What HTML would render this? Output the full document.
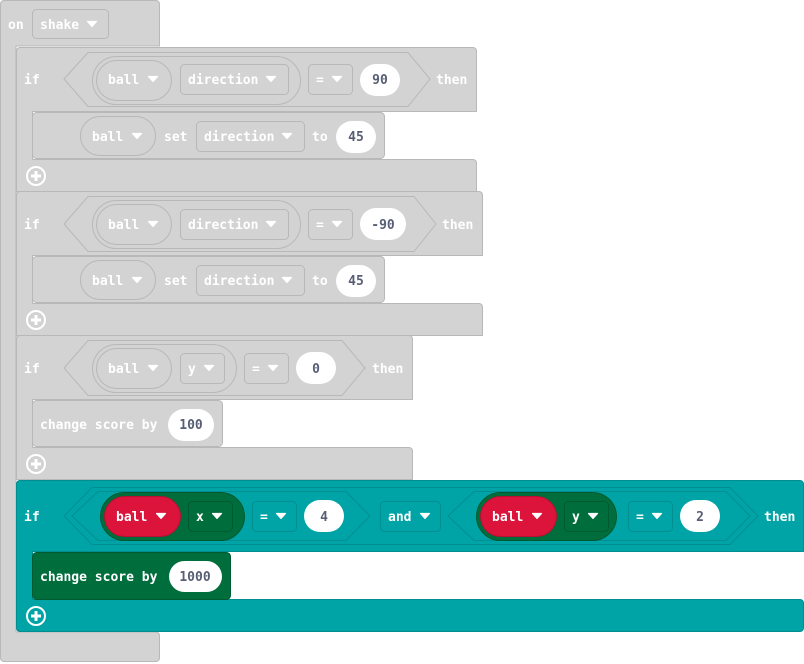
<!DOCTYPE html>
<html><head><meta charset="utf-8"><style>
html,body{margin:0;padding:0;background:#fff;width:804px;height:664px;overflow:hidden}
svg text{font-family:"DejaVu Sans Mono","Liberation Mono",monospace;font-weight:bold;font-size:13px;fill:#fff}
svg text.v{fill:#575E75;text-anchor:middle}
</style></head><body>
<svg width="804" height="664" viewBox="0 0 804 664" xmlns="http://www.w3.org/2000/svg">
<defs>
<g id="arr"><polygon points="0.5,-2.5 9.5,-2.5 5,2.5" fill="#fff" stroke="#fff" stroke-width="1.2" stroke-linejoin="round"/></g>
<g id="plus"><circle r="9" fill="none" stroke="#fff" stroke-width="2"/><path d="M-5,0H5M0,-5V5" stroke="#fff" stroke-width="3"/></g>
</defs>
<!-- event block -->
<path d="M4,0.5H156a3.5,3.5 0 0 1 3.5,3.5V46H16V632H156a3.5,3.5 0 0 1 3.5,3.5V658a3.5,3.5 0 0 1 -3.5,3.5H4a3.5,3.5 0 0 1 -3.5,-3.5V4a3.5,3.5 0 0 1 3.5,-3.5Z" fill="#d3d3d3" stroke="#b8b8b8"/>
<text x="8" y="29">on</text>
<rect x="32.5" y="9.5" width="76" height="29" rx="4" fill="none" stroke="#b8b8b8"/>
<text x="40" y="29">shake</text><use href="#arr" x="87" y="24"/>

<!-- if 1 -->
<path d="M20,47.5H473a3.5,3.5 0 0 1 3.5,3.5V111.5H32.5V159.5H473a3.5,3.5 0 0 1 3.5,3.5V191.5H16.5V51a3.5,3.5 0 0 1 3.5,-3.5Z" fill="#d3d3d3" stroke="#b8b8b8" stroke-linejoin="round"/>
<text x="24" y="84">if</text>
<polygon points="64,79 88,52.5 408,52.5 430,79 408,106.5 88,106.5" fill="none" stroke="#b8b8b8"/>
<rect x="92.5" y="56.5" width="208" height="48" rx="24" fill="none" stroke="#b8b8b8"/>
<rect x="96.5" y="60.5" width="75" height="40" rx="20" fill="none" stroke="#b8b8b8"/>
<text x="108" y="84">ball</text><use href="#arr" x="148" y="79"/>
<rect x="180.5" y="64.5" width="108" height="30" rx="4" fill="none" stroke="#b8b8b8"/>
<text x="188" y="84">direction</text><use href="#arr" x="266" y="79"/>
<rect x="308.5" y="64.5" width="44" height="30" rx="4" fill="none" stroke="#b8b8b8"/>
<text x="316" y="84">=</text><use href="#arr" x="332" y="79"/>
<rect x="360" y="64" width="40" height="32" rx="16" fill="#fff"/>
<text class="v" x="380" y="84">90</text>
<text x="436" y="84">then</text>
<rect x="32.5" y="112.5" width="352" height="46" rx="4" fill="#d3d3d3" stroke="#b8b8b8"/>
<rect x="80.5" y="116.5" width="75" height="39" rx="19.5" fill="none" stroke="#b8b8b8"/>
<text x="92" y="141">ball</text><use href="#arr" x="132" y="136"/>
<text x="164" y="141">set</text>
<rect x="196.5" y="121.5" width="108" height="30" rx="4" fill="none" stroke="#b8b8b8"/>
<text x="204" y="141">direction</text><use href="#arr" x="282" y="136"/>
<text x="312" y="141">to</text>
<rect x="336" y="121" width="40" height="32" rx="16" fill="#fff"/>
<text class="v" x="356" y="141">45</text>
<use href="#plus" x="36" y="176"/>

<!-- if 2 -->
<path d="M20,191.5H479a3.5,3.5 0 0 1 3.5,3.5V255.5H32.5V303.5H479a3.5,3.5 0 0 1 3.5,3.5V335.5H16.5V195a3.5,3.5 0 0 1 3.5,-3.5Z" fill="#d3d3d3" stroke="#b8b8b8" stroke-linejoin="round"/>
<text x="24" y="229">if</text>
<polygon points="64,224 88,196.5 414,196.5 436,224 414,251.5 88,251.5" fill="none" stroke="#b8b8b8"/>
<rect x="92.5" y="200.5" width="208" height="48" rx="24" fill="none" stroke="#b8b8b8"/>
<rect x="96.5" y="204.5" width="75" height="40" rx="20" fill="none" stroke="#b8b8b8"/>
<text x="108" y="229">ball</text><use href="#arr" x="148" y="224"/>
<rect x="180.5" y="209.5" width="108" height="30" rx="4" fill="none" stroke="#b8b8b8"/>
<text x="188" y="229">direction</text><use href="#arr" x="266" y="224"/>
<rect x="308.5" y="209.5" width="44" height="30" rx="4" fill="none" stroke="#b8b8b8"/>
<text x="316" y="229">=</text><use href="#arr" x="332" y="224"/>
<rect x="360" y="208" width="46" height="32" rx="16" fill="#fff"/>
<text class="v" x="383" y="229">-90</text>
<text x="442" y="229">then</text>
<rect x="32.5" y="256.5" width="352" height="46" rx="4" fill="#d3d3d3" stroke="#b8b8b8"/>
<rect x="80.5" y="260.5" width="75" height="39" rx="19.5" fill="none" stroke="#b8b8b8"/>
<text x="92" y="285">ball</text><use href="#arr" x="132" y="280"/>
<text x="164" y="285">set</text>
<rect x="196.5" y="265.5" width="108" height="30" rx="4" fill="none" stroke="#b8b8b8"/>
<text x="204" y="285">direction</text><use href="#arr" x="282" y="280"/>
<text x="312" y="285">to</text>
<rect x="336" y="265" width="40" height="32" rx="16" fill="#fff"/>
<text class="v" x="356" y="285">45</text>
<use href="#plus" x="36" y="320"/>

<!-- if 3 -->
<path d="M20,335.5H409a3.5,3.5 0 0 1 3.5,3.5V399.5H32.5V447.5H409a3.5,3.5 0 0 1 3.5,3.5V479.5H16.5V339a3.5,3.5 0 0 1 3.5,-3.5Z" fill="#d3d3d3" stroke="#b8b8b8" stroke-linejoin="round"/>
<text x="24" y="373">if</text>
<polygon points="64,368 88,340.5 342,340.5 365,368 342,395.5 88,395.5" fill="none" stroke="#b8b8b8"/>
<rect x="92.5" y="344.5" width="144" height="48" rx="24" fill="none" stroke="#b8b8b8"/>
<rect x="96.5" y="348.5" width="75" height="40" rx="20" fill="none" stroke="#b8b8b8"/>
<text x="108" y="373">ball</text><use href="#arr" x="148" y="368"/>
<rect x="180.5" y="353.5" width="44" height="30" rx="4" fill="none" stroke="#b8b8b8"/>
<text x="188" y="373">y</text><use href="#arr" x="204" y="368"/>
<rect x="244.5" y="353.5" width="44" height="30" rx="4" fill="none" stroke="#b8b8b8"/>
<text x="252" y="373">=</text><use href="#arr" x="268" y="368"/>
<rect x="296" y="352" width="40" height="32" rx="16" fill="#fff"/>
<text class="v" x="316" y="373">0</text>
<text x="372" y="373">then</text>
<rect x="32.5" y="400.5" width="190" height="46" rx="4" fill="#d3d3d3" stroke="#b8b8b8"/>
<text x="40" y="429">change score by</text>
<rect x="168" y="409" width="46" height="32" rx="16" fill="#fff"/>
<text class="v" x="191" y="429">100</text>
<use href="#plus" x="36" y="464"/>

<!-- if 4 teal -->
<path d="M20,480.5H800a3.5,3.5 0 0 1 3.5,3.5V551.5H32.5V599.5H800a3.5,3.5 0 0 1 3.5,3.5V628a3.5,3.5 0 0 1 -3.5,3.5H20a3.5,3.5 0 0 1 -3.5,-3.5V484a3.5,3.5 0 0 1 3.5,-3.5Z" fill="#00a4a6" stroke="#008e90" stroke-linejoin="round"/>
<text x="24" y="521">if</text>
<polygon points="64,516 92,487.5 730,487.5 758,516 730,544.5 92,544.5" fill="none" stroke="#008e90"/>
<polygon points="72,516 98,491.5 346,491.5 370,516 346,540.5 98,540.5" fill="none" stroke="#008e90"/>
<rect x="100.5" y="492.5" width="144" height="48" rx="24" fill="#006e3c" stroke="#005a31"/>
<rect x="104.5" y="496.5" width="76" height="40" rx="20" fill="#dc143c" stroke="#b81030"/>
<text x="116" y="521">ball</text><use href="#arr" x="156" y="516"/>
<rect x="188.5" y="501.5" width="44" height="30" rx="4" fill="#006e3c" stroke="#005a31"/>
<text x="196" y="521">x</text><use href="#arr" x="212" y="516"/>
<rect x="252.5" y="501.5" width="44" height="30" rx="4" fill="#00a4a6" stroke="#008e90"/>
<text x="260" y="521">=</text><use href="#arr" x="276" y="516"/>
<rect x="304" y="500" width="40" height="32" rx="16" fill="#fff"/>
<text class="v" x="324" y="521">4</text>
<rect x="380.5" y="501.5" width="60" height="30" rx="4" fill="#00a4a6" stroke="#008e90"/>
<text x="388" y="521">and</text><use href="#arr" x="420" y="516"/>
<polygon points="448,516 474,491.5 726,491.5 750,516 726,540.5 474,540.5" fill="none" stroke="#008e90"/>
<rect x="476.5" y="492.5" width="140" height="48" rx="24" fill="#006e3c" stroke="#005a31"/>
<rect x="480.5" y="496.5" width="76" height="40" rx="20" fill="#dc143c" stroke="#b81030"/>
<text x="492" y="521">ball</text><use href="#arr" x="532" y="516"/>
<rect x="564.5" y="501.5" width="44" height="30" rx="4" fill="#006e3c" stroke="#005a31"/>
<text x="572" y="521">y</text><use href="#arr" x="588" y="516"/>
<rect x="628.5" y="501.5" width="44" height="30" rx="4" fill="#00a4a6" stroke="#008e90"/>
<text x="636" y="521">=</text><use href="#arr" x="652" y="516"/>
<rect x="680" y="500" width="40" height="32" rx="16" fill="#fff"/>
<text class="v" x="700" y="521">2</text>
<text x="764" y="521">then</text>
<rect x="32.5" y="552.5" width="198" height="47" rx="4" fill="#006e3c" stroke="#005a31"/>
<text x="40" y="581">change score by</text>
<rect x="169" y="561" width="53" height="31" rx="15.5" fill="#fff"/>
<text class="v" x="195" y="581">1000</text>
<use href="#plus" x="36" y="616"/>
</svg>
</body></html>
